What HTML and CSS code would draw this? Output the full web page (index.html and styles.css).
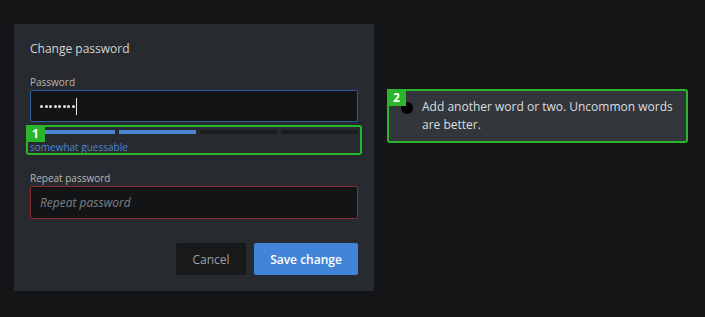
FILE: index.html
```html
<!DOCTYPE html>
<html lang="en">
<head>
    <meta charset="UTF-8">
    <meta name="viewport" content="width=device-width, initial-scale=1.0">
    <title>Change password</title>
    <link rel="stylesheet" href="styles.css">
</head>
<body>
    <div class="stage">
        <div class="dialog">
            <h2 class="dialog-title">Change password</h2>

            <label class="field-label">Password</label>
            <div class="field field-active">
                <span class="dots">
                    <i></i><i></i><i></i><i></i><i></i><i></i><i></i><i></i>
                </span>
                <span class="caret"></span>
            </div>

            <div class="strength">
                <div class="bars">
                    <span class="bar bar-on"></span>
                    <span class="bar bar-on"></span>
                    <span class="bar"></span>
                    <span class="bar"></span>
                </div>
                <div class="strength-text">somewhat guessable</div>
                <div class="mark"><span class="badge">1</span></div>
            </div>

            <label class="field-label field-label-gap">Repeat password</label>
            <div class="field field-error">
                <span class="placeholder">Repeat password</span>
            </div>

            <div class="actions">
                <button class="btn btn-cancel">Cancel</button>
                <button class="btn btn-primary">Save change</button>
            </div>
        </div>

        <div class="hint">
            <span class="hint-dot"></span>
            <span class="badge hint-badge">2</span>
            <p class="hint-text">Add another word or two. Uncommon words<br>are better.</p>
        </div>
    </div>
</body>
</html>
```

FILE: styles.css
```css
body {
    margin: 0;
    background-color: #141517;
    font-family: 'Open Sans', 'Noto Sans', sans-serif;
    color: #c9ccd0;
}
.stage {
    display: flex;
    align-items: flex-start;
    padding: 24px 0 0 14px;
}
.dialog {
    width: 360px;
    box-sizing: border-box;
    padding: 16px 16px 16px;
    background-color: #272a2e;
}
.dialog-title {
    margin: 0 0 17px;
    font-size: 12px;
    line-height: 18px;
    font-weight: 400;
    color: #d3d5d8;
}
.field-label {
    display: block;
    font-size: 10px;
    line-height: 15px;
    color: #b4b7bb;
}
.field-label-gap {
    margin-top: 16px;
}
.field {
    height: 32px;
    box-sizing: border-box;
    display: flex;
    align-items: center;
    padding: 0 9px;
    background-color: #131416;
    border: 1px solid #2f5d9c;
    border-radius: 2px;
}
.field-error {
    height: 33px;
    border-color: #8a2d2b;
}
.dots {
    display: flex;
    gap: 1.5px;
}
.dots i {
    width: 3px;
    height: 3px;
    border-radius: 50%;
    background-color: #e4e4e4;
}
.caret {
    width: 1px;
    height: 17px;
    margin-left: 1px;
    background-color: #e8e8e8;
}
.placeholder {
    font-size: 12px;
    font-style: italic;
    color: #7d8186;
}
.strength {
    position: relative;
    margin-top: 8px;
}
.bars {
    display: flex;
    gap: 4px;
    margin-left: 8px;
}
.bar {
    flex: 1;
    height: 4px;
    background-color: #1a1c1e;
}
.bar-on {
    background-color: #4a86d4;
}
.strength-text {
    margin-top: 6px;
    font-size: 10px;
    line-height: 15px;
    color: #4a86d4;
}
.mark {
    position: absolute;
    top: -5px;
    left: -4px;
    right: -4px;
    bottom: 0;
    border: 2px solid #2bb52b;
    border-radius: 3px;
}
.badge {
    position: absolute;
    top: -2px;
    left: -2px;
    width: 19px;
    height: 17px;
    background-color: #2bb52b;
    color: #fff;
    font-size: 12px;
    font-weight: 700;
    line-height: 17px;
    text-align: center;
}
.actions {
    display: flex;
    justify-content: flex-end;
    gap: 8px;
    margin-top: 24px;
}
.btn {
    height: 32px;
    border: none;
    border-radius: 2px;
    font-family: 'Open Sans', 'Noto Sans', sans-serif;
    font-size: 12px;
    cursor: pointer;
}
.btn-cancel {
    width: 70px;
    background-color: #18191b;
    color: #9da1a6;
}
.btn-primary {
    width: 104px;
    background-color: #4285d8;
    color: #fff;
    font-weight: 600;
}
.hint {
    position: relative;
    width: 301px;
    box-sizing: border-box;
    margin: 65px 0 0 13px;
    padding: 7px 10px 7px 33px;
    background-color: #33363a;
    border: 2px solid #2bb52b;
    border-radius: 3px;
}
.hint-dot {
    position: absolute;
    top: 11px;
    left: 12px;
    width: 12px;
    height: 12px;
    border-radius: 50%;
    background-color: #000;
}
.hint-text {
    margin: 0;
    font-size: 12px;
    line-height: 18px;
    color: #dcdee0;
}
```
